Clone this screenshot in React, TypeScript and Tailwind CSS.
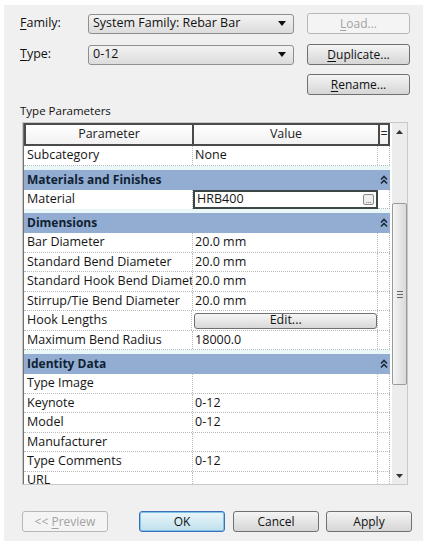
import type { ReactNode } from "react";

const font = { fontFamily: '"Open Sans", "Noto Sans", sans-serif' };

function U({ children }: { children: ReactNode }) {
  return <span className="underline underline-offset-2">{children}</span>;
}

function Caret() {
  return (
    <svg width="8" height="5" viewBox="0 0 8 5" className="shrink-0">
      <path d="M0 0 H8 L4 5 Z" fill="#111" />
    </svg>
  );
}

function Select({ value }: { value: string }) {
  return (
    <div className="flex h-[20px] w-[206px] items-center justify-between rounded-[3px] border border-[#8e8f8f] bg-linear-to-b from-[#f3f3f3] to-[#dcdcdc] pl-[4px] pr-[7px] text-[12.5px] text-[#111]">
      <span>{value}</span>
      <Caret />
    </div>
  );
}

function Btn({
  children,
  disabled,
  primary,
  className = "",
}: {
  children: ReactNode;
  disabled?: boolean;
  primary?: boolean;
  className?: string;
}) {
  let look =
    "border-[#707070] bg-linear-to-b from-[#f4f4f4] to-[#d6d6d6] text-[#111]";
  if (disabled) look = "border-[#b5b8ba] bg-[#f4f4f4] text-[#a3a3a3]";
  if (primary)
    look =
      "border-[#3c6fb8] bg-linear-to-b from-[#eaf6fb] to-[#bfe0ec] text-[#111] shadow-[inset_0_0_0_1px_#7ec4e8]";
  return (
    <div
      className={`flex h-[21px] w-[86px] items-center justify-center whitespace-pre rounded-[3px] border text-[12px] ${look} ${className}`}
    >
      {children}
    </div>
  );
}

function Chevrons() {
  return (
    <svg width="8" height="10" viewBox="0 0 8 10" className="shrink-0">
      <path d="M1 4.5 L4 1.5 L7 4.5 M1 8.5 L4 5.5 L7 8.5" stroke="#1b2b3a" strokeWidth="1.6" fill="none" />
    </svg>
  );
}

function Row({ name, value, children }: { name: string; value?: string; children?: ReactNode }) {
  return (
    <div className="flex h-[19.5px] shrink-0 border-b border-dotted border-[#b9b9b9] text-[12.5px] text-[#151515]">
      <div className="flex w-[170px] items-center overflow-hidden whitespace-nowrap border-r border-dotted border-[#b9b9b9] pl-[3px]">
        {name}
      </div>
      <div className="flex w-[186px] items-center border-r border-dotted border-[#b9b9b9] pl-[2px]">
        {children ?? value}
      </div>
      <div className="w-[12px] border-r border-dotted border-[#b9b9b9]" />
    </div>
  );
}

function Group({ title }: { title: string }) {
  return (
    <>
      <div className="h-[4px] shrink-0 bg-[#eaf7f8]" />
      <div className="flex h-[20px] w-[368px] shrink-0 items-center justify-between bg-[#93add2] pl-[3px] pr-[4px] text-[12px] font-bold text-[#0f2233]">
        <span>{title}</span>
        <Chevrons />
      </div>
    </>
  );
}

function Triangle({ up }: { up?: boolean }) {
  return (
    <svg width="7" height="4" viewBox="0 0 7 4">
      <path d={up ? "M0 4 L3.5 0 L7 4 Z" : "M0 0 H7 L3.5 4 Z"} fill="#333" />
    </svg>
  );
}

function ScrollBar() {
  return (
    <div className="flex w-[15px] flex-col bg-[#ececec]">
      <div className="flex h-[17px] items-center justify-center">
        <Triangle up />
      </div>
      <div className="h-[63px]" />
      <div className="flex h-[182px] flex-col items-center justify-center gap-[2px] rounded-[2px] border border-[#9a9a9a] bg-linear-to-r from-[#f4f4f4] to-[#dadada]">
        <div className="h-px w-[6px] bg-[#666]" />
        <div className="h-px w-[6px] bg-[#666]" />
        <div className="h-px w-[6px] bg-[#666]" />
      </div>
      <div className="flex-1" />
      <div className="flex h-[17px] items-center justify-center">
        <Triangle />
      </div>
    </div>
  );
}

function Table() {
  return (
    <div className="ml-[2px] mt-[3px] flex h-[363px] w-[386px] border border-[#c8c8c8] bg-white">
      <div className="flex w-[368px] flex-col overflow-hidden border-l border-[#707070]">
        <div className="flex h-[23px] shrink-0 border-2 border-[#4a4a4a] bg-linear-to-b from-white to-[#f1f1f1] text-[12.5px] text-[#222]">
          <div className="flex w-[168px] items-center justify-center border-r-2 border-[#4a4a4a]">Parameter</div>
          <div className="flex w-[186px] items-center justify-center border-r-2 border-[#4a4a4a]">Value</div>
          <div className="flex flex-1 items-center justify-center">=</div>
        </div>
        <Row name="Subcategory" value="None" />
        <Group title="Materials and Finishes" />
        <div className="flex h-[19.5px] shrink-0 text-[12.5px] text-[#151515]">
          <div className="flex w-[170px] items-center border-r border-dotted border-[#b9b9b9] pl-[3px]">Material</div>
          <div className="flex w-[186px] items-center justify-between border-2 border-[#3d4646] pl-[2px] pr-[2px]">
            <span>HRB400</span>
            <div className="flex h-[11px] w-[11px] items-end justify-center rounded-[2px] border border-[#8a8a8a] bg-[#eee] pb-[1px] text-[7px] leading-[4px] text-[#444]">
              ...
            </div>
          </div>
          <div className="w-[12px] border-b border-r border-dotted border-[#b9b9b9]" />
        </div>
        <Group title="Dimensions" />
        <Row name="Bar Diameter" value="20.0 mm" />
        <Row name="Standard Bend Diameter" value="20.0 mm" />
        <Row name="Standard Hook Bend Diamet" value="20.0 mm" />
        <Row name="Stirrup/Tie Bend Diameter" value="20.0 mm" />
        <Row name="Hook Lengths">
          <div className="flex h-[16px] w-[183px] items-center justify-center rounded-[3px] border border-[#707070] bg-linear-to-b from-[#f6f6f6] to-[#d8d8d8]">
            Edit...
          </div>
        </Row>
        <Row name="Maximum Bend Radius" value="18000.0" />
        <Group title="Identity Data" />
        <Row name="Type Image" />
        <Row name="Keynote" value="0-12" />
        <Row name="Model" value="0-12" />
        <Row name="Manufacturer" />
        <Row name="Type Comments" value="0-12" />
        <div className="flex h-[14px] shrink-0 text-[12.5px] leading-[16px] text-[#151515]">
          <div className="w-[170px] overflow-hidden border-r border-dotted border-[#b9b9b9] pl-[3px]">URL</div>
          <div className="w-[186px] border-r border-dotted border-[#b9b9b9]" />
          <div className="w-[12px] border-r border-dotted border-[#b9b9b9]" />
        </div>
      </div>
      <div className="w-[2px]" />
      <ScrollBar />
    </div>
  );
}

export default function App() {
  return (
    <div className="h-[550px] w-[427px] bg-white px-[4px] pb-[9px] pt-[5px]" style={font}>
      <div className="h-full bg-[#f0f0f0] pl-[16px] pt-[8px]">
        <div className="flex items-center">
          <div className="w-[68px] text-[12.5px] text-[#111]">
            <U>F</U>amily:
          </div>
          <Select value="System Family: Rebar Bar" />
          <Btn disabled className="ml-[13px] w-[103px]">
            <U>L</U>oad...
          </Btn>
        </div>
        <div className="mt-[10px] flex items-center">
          <div className="w-[68px] text-[12.5px] text-[#111]">
            <U>T</U>ype:
          </div>
          <Select value="0-12" />
          <Btn className="ml-[13px] w-[103px]">
            <U>D</U>uplicate...
          </Btn>
        </div>
        <div className="mt-[9px] flex">
          <Btn className="ml-[287px] w-[103px]">
            <U>R</U>ename...
          </Btn>
        </div>
        <div className="mt-[7px] text-[11.5px] text-[#111]">Type Parameters</div>
        <Table />
        <div className="mt-[26px] flex text-[#111]">
          <Btn disabled className="ml-[2px]">
            {"<< "}
            <U>P</U>review
          </Btn>
          <Btn primary className="ml-[31px]">
            OK
          </Btn>
          <Btn className="ml-[8px]">Cancel</Btn>
          <Btn className="ml-[7px]">Apply</Btn>
        </div>
      </div>
    </div>
  );
}
